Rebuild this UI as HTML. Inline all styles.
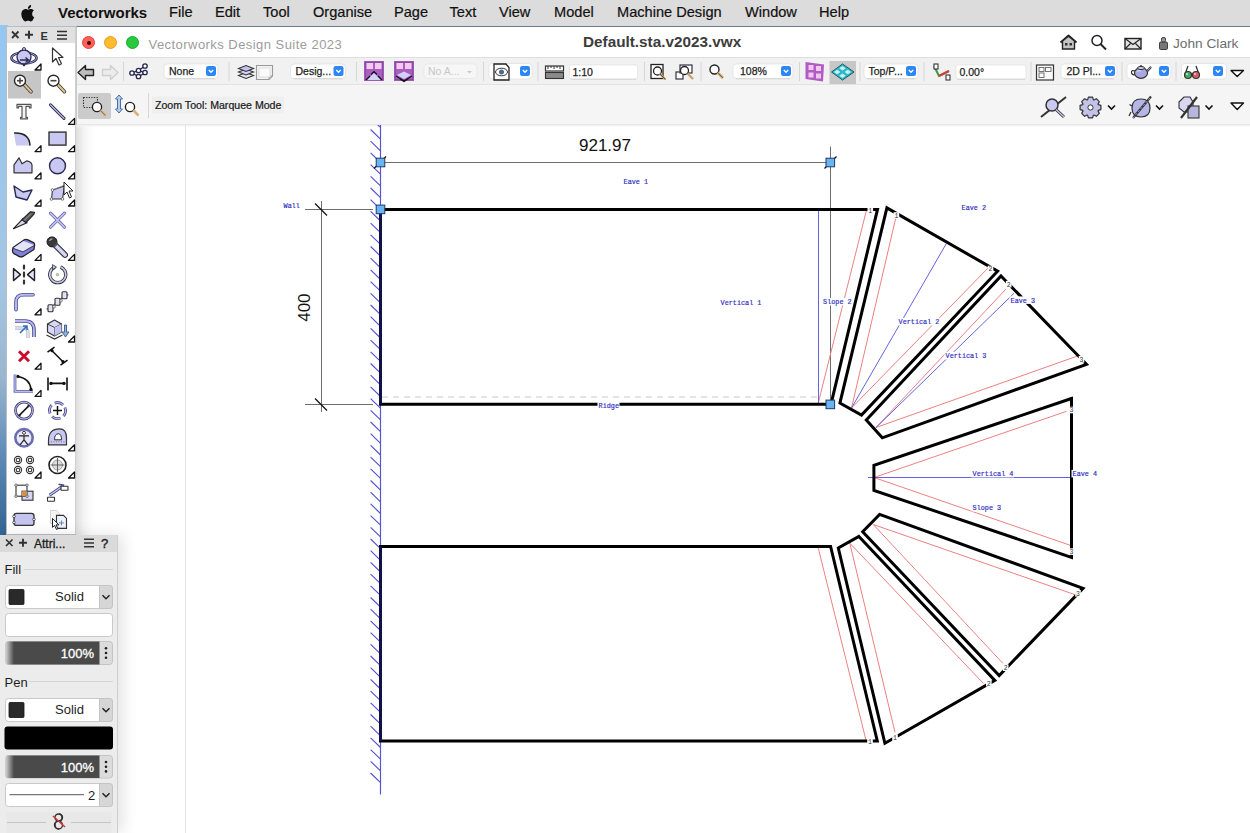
<!DOCTYPE html>
<html><head><meta charset="utf-8">
<style>
*{box-sizing:border-box}
html,body{margin:0;padding:0}
body{width:1250px;height:833px;overflow:hidden;position:relative;background:#d6dde5;font-family:"Liberation Sans",sans-serif;color:#222}
.abs{position:absolute}
#desk{left:0;top:24px;width:8px;height:520px;background:linear-gradient(#93c8f2,#a4c6e4 50%,#9ab6d0 68%,#5a88b4 84%,#2f5e8e)}
#menubar{left:0;top:0;width:1250px;height:24.5px;background:#dcdcdc}
#menubar span{position:absolute;top:4px;font-size:14.6px;color:#111;white-space:nowrap;-webkit-text-stroke:0.2px #111}
#win{left:76px;top:26px;width:1174px;height:807px;background:#fff;border-top:1px solid #6f7a86;border-left:1px solid #c8c8c8}
#title{left:0;top:0;width:1174px;height:30px;background:#fff}
#tb1{left:0;top:30px;width:1174px;height:28px;background:#f1f1f1;border-top:1px solid #dedede;border-bottom:1px solid #e2e2e2}
#tb2{left:0;top:58px;width:1174px;height:40px;background:#f5f5f5;border-bottom:1px solid #e6e6e6}
.light{width:13px;height:13px;border-radius:50%;top:9px}
.dd{position:absolute;height:19px;background:#fff;border-radius:4px;box-shadow:0 0.5px 1.5px rgba(0,0,0,.3);font-size:11px;color:#222;line-height:19px;padding-left:7px;white-space:nowrap}
.dd .chk{position:absolute;right:3px;top:3px;width:13px;height:13px;border-radius:3px;background:#2a86f4}
.dd .chk:after{content:"";position:absolute;left:3.5px;top:3px;width:4px;height:4px;border-right:1.6px solid #fff;border-bottom:1.6px solid #fff;transform:rotate(45deg)}
.sep{position:absolute;width:1px;background:#d8d8d8}
#pal{left:6px;top:26px;width:69.5px;height:509px;background:#fff;border:1px solid #b9bcc2;border-right:1px solid #d0d0d0}
#palhdr{left:0;top:0;width:68px;height:16px;background:#e1e1e1}
#attr{left:0;top:535px;width:118px;height:298px;background:#ececec;border-right:1px solid #cfcfcf;box-shadow:5px 0 14px rgba(0,0,0,.11)}
#attrhdr{left:0;top:0;width:117px;height:17px;background:#dadada}
</style></head>
<body>
<div id="desk" class="abs"></div>
<div id="menubar" class="abs">
  <svg class="abs" style="left:21px;top:4px" width="16" height="18" viewBox="0 0 16 18"><path d="M11.2 9.6c0-2 1.6-2.9 1.7-3-0.9-1.4-2.4-1.6-2.9-1.6-1.2-0.1-2.400.7-3 0.7-0.6 0-1.6-0.7-2.6-0.7C3 5.100 1.7 5.900 1 7.200c-1.400 2.500-0.4 6.200 1 8.200 0.7 1 1.500 2.100 2.500 2 1-0.04 1.400-0.6 2.600-0.6s1.500 0.6 2.600 0.600c1.100 0 1.800-1 2.400-2 0.800-1.100 1.100-2.200 1.100-2.300-0.03 0-2.100-0.800-2.100-3.200zM9.300 3.700c0.500-0.700 0.900-1.600 0.800-2.600-0.800 0.03-1.800 0.500-2.400 1.200-0.500 0.600-1 1.600-0.800 2.500 0.900 0.1 1.800-0.400 2.400-1.100z" fill="#111"/></svg>
  <span style="left:58px;font-weight:bold;font-size:15px;-webkit-text-stroke:0">Vectorworks</span>
  <span style="left:169px">File</span>
  <span style="left:215px">Edit</span>
  <span style="left:263px">Tool</span>
  <span style="left:313px">Organise</span>
  <span style="left:394px">Page</span>
  <span style="left:449.5px">Text</span>
  <span style="left:499px">View</span>
  <span style="left:554px">Model</span>
  <span style="left:617px">Machine Design</span>
  <span style="left:745px">Window</span>
  <span style="left:819px">Help</span>
</div>

<div id="win" class="abs">
  <div id="title" class="abs">
    <div class="abs light" style="left:5px;background:#fe5f57;border:0.5px solid #e0443e"><div class="abs" style="left:4px;top:4px;width:4px;height:4px;border-radius:50%;background:#4d0000"></div></div>
    <div class="abs light" style="left:27px;background:#febc2e;border:0.5px solid #dfa023"></div>
    <div class="abs light" style="left:49px;background:#28c840;border:0.5px solid #1aab29"></div>
    <div class="abs" style="left:71.5px;top:10px;font-size:13px;letter-spacing:0.45px;color:#9c9c9c;white-space:nowrap">Vectorworks Design Suite 2023</div>
    <div class="abs" style="left:506px;top:6px;font-size:15.3px;font-weight:bold;color:#3c3c3c;white-space:nowrap">Default.sta.v2023.vwx</div>
    <div class="abs" style="left:1096px;top:9px;font-size:13.7px;color:#6e6e6e;white-space:nowrap">John Clark</div>
  </div>
  <div id="tb1" class="abs"></div>
  <div id="tb2" class="abs">
    <div class="abs" style="left:1px;top:8px;width:33px;height:26px;background:#cbcbcb;border-radius:2px"></div>
  </div>
</div>

<svg id="ui" class="abs" style="left:0;top:0" width="1250" height="125" font-family="Liberation Sans">
<path d="M1060.5 42.5L1068.5 35.5L1076.5 42.5" fill="none" stroke="#222" stroke-width="1.8" stroke-linejoin="round"/><path d="M1062.5 41L1068.5 36.3L1074.5 41V49H1062.5Z" fill="#c4c4c4" stroke="#222" stroke-width="1.4"/><rect x="1065" y="43" width="2.5" height="2.5" fill="#333"/><rect x="1069.5" y="43" width="2.5" height="2.5" fill="#333"/>
<circle cx="1097" cy="40.5" r="5" fill="#fff" stroke="#222" stroke-width="1.5"/><line x1="1100.5" y1="44" x2="1106" y2="49.5" stroke="#222" stroke-width="2"/>
<rect x="1125" y="38.5" width="16" height="10.5" fill="#e4e4e4" stroke="#222" stroke-width="1.4"/><path d="M1125 38.5L1133 44.5L1141 38.5M1125 49L1130.5 43.5M1141 49L1135.5 43.5" fill="none" stroke="#222" stroke-width="1.1"/>
<rect x="1159.5" y="42" width="8" height="7.5" rx="1.2" fill="#777" stroke="#333" stroke-width="0.9"/><rect x="1161.5" y="37.5" width="4" height="4.5" rx="1.5" fill="#999" stroke="#333" stroke-width="0.9"/>
<path d="M78 72.5L85.5 65.5V69.5H93.5V75.5H85.5V79.5Z" fill="#bdbdbd" stroke="#222" stroke-width="1.4" stroke-linejoin="round"/>
<path d="M118 72.5L110.5 65.5V69.5H102.5V75.5H110.5V79.5Z" fill="#ececec" stroke="#cfcfcf" stroke-width="1.4" stroke-linejoin="round"/>
<line x1="123.5" y1="62" x2="123.5" y2="81" stroke="#d6d6d6" stroke-width="1"/>
<g stroke="#25254d" stroke-width="1.3" fill="#fff"><path d="M132 73L138.5 70.5L145 66M132 73L138.5 76.5L145 73M132 73L138.5 70.5L145 73M138.5 76.5L145 73" fill="none"/><circle cx="132" cy="73" r="2.2"/><circle cx="138.5" cy="70.5" r="2.2"/><circle cx="138.5" cy="76.5" r="2.2"/><circle cx="145" cy="66" r="2.2"/><circle cx="145" cy="72.5" r="2.2"/></g>
<rect x="164" y="64" width="54" height="14.5" rx="3.5" fill="#fff" stroke="#d9d9d9" stroke-width="0.6"/>
<line x1="167" y1="78.8" x2="215" y2="78.8" stroke="#cfcfcf" stroke-width="0.8"/>
<text x="169" y="74.6" font-size="10.5" fill="#222" stroke="#222" stroke-width="0.25" font-family="Liberation Sans">None</text>
<rect x="206" y="66" width="10" height="10" rx="2.2" fill="#2c87f5"/>
<path d="M208.8 70L211.0 72.3L213.2 70" stroke="#fff" stroke-width="1.3" fill="none"/>
<line x1="229" y1="62" x2="229" y2="81" stroke="#d6d6d6" stroke-width="1"/>
<g stroke="#333" stroke-width="1.1"><path d="M238.5 75.5L246 72.5L253.5 75.5L246 78.5Z" fill="#e6e6f6"/><path d="M238.5 72L246 69L253.5 72L246 75Z" fill="#d2d2f2"/><path d="M238.5 68.5L246 65.5L253.5 68.5L246 71.5Z" fill="#c4c4ee"/></g>
<path d="M256.5 65.5H272.5V76L269 79.5H256.5Z" fill="#f2f2f2" stroke="#9a9a9a" stroke-width="1.1"/><path d="M272.5 76H269V79.5" fill="none" stroke="#9a9a9a" stroke-width="0.9"/><rect x="259" y="68" width="11" height="9" fill="#fafafa" stroke="#d0d0d0" stroke-width="0.6"/>
<rect x="290.5" y="64" width="55.0" height="14.5" rx="3.5" fill="#fff" stroke="#d9d9d9" stroke-width="0.6"/>
<line x1="293.5" y1="78.8" x2="342.5" y2="78.8" stroke="#cfcfcf" stroke-width="0.8"/>
<text x="295.5" y="74.6" font-size="10.5" fill="#222" stroke="#222" stroke-width="0.25" font-family="Liberation Sans">Desig...</text>
<rect x="333.5" y="66" width="10" height="10" rx="2.2" fill="#2c87f5"/>
<path d="M336.3 70L338.5 72.3L340.7 70" stroke="#fff" stroke-width="1.3" fill="none"/>
<line x1="356.5" y1="62" x2="356.5" y2="81" stroke="#d6d6d6" stroke-width="1"/>
<rect x="364" y="61" width="20" height="20" fill="#a95fc0"/><rect x="365.2" y="62.2" width="17.6" height="17.6" fill="none" stroke="#7a3f90" stroke-width="0.8"/>
<rect x="366.5" y="63" width="6.5" height="6" fill="#f4c8f0"/><rect x="375" y="63" width="6.5" height="6" fill="#f4c8f0"/>
<rect x="394" y="61" width="20" height="20" fill="#a95fc0"/><rect x="395.2" y="62.2" width="17.6" height="17.6" fill="none" stroke="#7a3f90" stroke-width="0.8"/>
<rect x="396.5" y="63" width="6.5" height="6" fill="#f4c8f0"/><rect x="405" y="63" width="6.5" height="6" fill="#f4c8f0"/>
<path d="M367 80L374 73L381 80Z" fill="#d2d2f4"/><path d="M366 80L370 76M382 80L378 76M374 73V71.5M371 74.5L374 71.5L377 74.5" fill="none" stroke="#111" stroke-width="1.2"/>
<path d="M397 75L404 71.5L411 75L404 79Z" fill="#d2d2f4"/><path d="M396 76L404 81L412 76M400 79L404 81.5L408 79" fill="none" stroke="#111" stroke-width="1.3"/>
<rect x="424" y="64" width="53" height="14.5" rx="3.5" fill="#f6f6f6" stroke="#e3e3e3" stroke-width="0.6"/>
<text x="428" y="74.8" font-size="10.5" fill="#c6c6c6" font-family="Liberation Sans">No A...</text>
<path d="M467 71L469.5 73.5L472 71Z" fill="#c8c8c8"/>
<line x1="483.5" y1="62" x2="483.5" y2="81" stroke="#d6d6d6" stroke-width="1"/>
<rect x="489" y="63.5" width="43" height="15.5" rx="3.5" fill="#fff" stroke="#d9d9d9" stroke-width="0.6"/>
<path d="M494 64V80H509V67.5L506 64Z" fill="#fff" stroke="#222" stroke-width="1.3"/>
<ellipse cx="501.5" cy="72" rx="6" ry="3.8" fill="#fff" stroke="#333" stroke-width="1"/><circle cx="501.5" cy="72" r="2.5" fill="#4d6a8c"/>
<rect x="520" y="66" width="10" height="10" rx="2.2" fill="#2c87f5"/>
<path d="M522.8 70L525.0 72.3L527.2 70" stroke="#fff" stroke-width="1.3" fill="none"/>
<line x1="538" y1="62" x2="538" y2="81" stroke="#d6d6d6" stroke-width="1"/>
<rect x="545.5" y="66" width="18" height="5" fill="#fff" stroke="#333" stroke-width="1.2"/><rect x="545.5" y="72.5" width="18" height="6" fill="#8a8a8a" stroke="#333" stroke-width="1.1"/>
<path d="M548 66V69M551 66V68M554 66V69M557 66V68M560 66V69" stroke="#333" stroke-width="1"/>
<rect x="569.5" y="65" width="68" height="14" rx="2" fill="#fff" stroke="#dcdcdc" stroke-width="0.6"/>
<line x1="571" y1="79.3" x2="636" y2="79.3" stroke="#cfcfcf" stroke-width="0.8"/>
<text x="572.5" y="75.8" font-size="10.5" fill="#222" stroke="#222" stroke-width="0.25" font-family="Liberation Sans">1:10</text>
<line x1="644.5" y1="62" x2="644.5" y2="81" stroke="#d6d6d6" stroke-width="1"/>
<rect x="651" y="64.5" width="12" height="14" fill="#fff" stroke="#222" stroke-width="1.3"/><circle cx="657.5" cy="71" r="4" fill="#fff" stroke="#222" stroke-width="1.3"/><line x1="660" y1="74" x2="665.5" y2="79.5" stroke="#c9a36a" stroke-width="2.4"/><line x1="660" y1="74" x2="665.5" y2="79.5" stroke="#222" stroke-width="0.6"/>
<rect x="676" y="72" width="7" height="7" fill="#fff" stroke="#334" stroke-width="1.2"/><rect x="680" y="65" width="12" height="8" fill="#fff" stroke="#334" stroke-width="1.2"/><circle cx="684.5" cy="70.5" r="4" fill="#fff" stroke="#222" stroke-width="1.3"/><line x1="687.5" y1="73.5" x2="693" y2="79" stroke="#c9a36a" stroke-width="2.4"/>
<line x1="701" y1="62" x2="701" y2="81" stroke="#d6d6d6" stroke-width="1"/>
<circle cx="714.5" cy="69.5" r="4.5" fill="#fff" stroke="#222" stroke-width="1.4"/><line x1="717.5" y1="72.5" x2="723" y2="78" stroke="#c9a36a" stroke-width="2.6"/><line x1="717.5" y1="72.5" x2="723" y2="78" stroke="#333" stroke-width="0.5"/>
<rect x="733" y="64" width="60" height="14.5" rx="3.5" fill="#fff" stroke="#d9d9d9" stroke-width="0.6"/>
<line x1="736" y1="78.8" x2="790" y2="78.8" stroke="#cfcfcf" stroke-width="0.8"/>
<text x="740" y="74.6" font-size="10.5" fill="#222" stroke="#222" stroke-width="0.25" font-family="Liberation Sans">108%</text>
<rect x="781" y="66" width="10" height="10" rx="2.2" fill="#2c87f5"/>
<path d="M783.8 70L786.0 72.3L788.2 70" stroke="#fff" stroke-width="1.3" fill="none"/>
<line x1="799.5" y1="62" x2="799.5" y2="81" stroke="#d6d6d6" stroke-width="1"/>
<path d="M805.5 62L824 64.5L823 81.5L805.5 79Z" fill="#b05cc4"/>
<g fill="#f0c8ee"><rect x="808.5" y="65" width="5" height="5"/><rect x="816" y="66" width="5" height="5"/><rect x="808.5" y="72.5" width="5" height="5"/><rect x="816" y="73.5" width="5" height="5"/></g>
<rect x="829.5" y="61" width="26.5" height="23" fill="#c7c7c7"/>
<path d="M831.5 72L842.5 64L854 72L842.5 80Z" fill="#2fb7c7" stroke="#1b5b66" stroke-width="1"/>
<path d="M834.0 72L837.2 69.7L840.4000000000001 72L837.2 74.3Z" fill="#c9f1f5"/>
<path d="M839.3 68.2L842.5 65.9L845.7 68.2L842.5 70.5Z" fill="#c9f1f5"/>
<path d="M844.5999999999999 72L847.8 69.7L851.0 72L847.8 74.3Z" fill="#c9f1f5"/>
<path d="M839.3 75.8L842.5 73.5L845.7 75.8L842.5 78.1Z" fill="#c9f1f5"/>
<line x1="860" y1="62" x2="860" y2="81" stroke="#d6d6d6" stroke-width="1"/>
<rect x="864" y="64" width="54" height="14.5" rx="3.5" fill="#fff" stroke="#d9d9d9" stroke-width="0.6"/>
<line x1="867" y1="78.8" x2="915" y2="78.8" stroke="#cfcfcf" stroke-width="0.8"/>
<text x="868.5" y="74.6" font-size="10.5" fill="#222" stroke="#222" stroke-width="0.25" font-family="Liberation Sans">Top/P...</text>
<rect x="906" y="66" width="10" height="10" rx="2.2" fill="#2c87f5"/>
<path d="M908.8 70L911.0 72.3L913.2 70" stroke="#fff" stroke-width="1.3" fill="none"/>
<line x1="924" y1="62" x2="924" y2="81" stroke="#d6d6d6" stroke-width="1"/>
<path d="M934 66L939 76L949 71" fill="none" stroke="#3a9a3a" stroke-width="2"/><path d="M939 76L949 71" stroke="#d43c3c" stroke-width="2"/><rect x="934" y="64" width="4" height="5" fill="#fff" stroke="#222" stroke-width="1"/><rect x="946" y="75" width="4" height="5" fill="#fff" stroke="#222" stroke-width="1"/>
<rect x="956" y="65" width="70" height="14" rx="2" fill="#fff" stroke="#dcdcdc" stroke-width="0.6"/>
<line x1="957" y1="79.3" x2="1025" y2="79.3" stroke="#cfcfcf" stroke-width="0.8"/>
<text x="959.5" y="75.8" font-size="10.5" fill="#222" stroke="#222" stroke-width="0.25" font-family="Liberation Sans">0.00°</text>
<line x1="1031" y1="62" x2="1031" y2="81" stroke="#d6d6d6" stroke-width="1"/>
<rect x="1036.5" y="65" width="17" height="15" fill="#fafafa" stroke="#333" stroke-width="1.2"/><rect x="1039" y="67.5" width="5" height="4" fill="none" stroke="#666" stroke-width="0.9"/><rect x="1045.5" y="67.5" width="5.5" height="4" fill="none" stroke="#666" stroke-width="0.9"/><rect x="1039" y="73" width="5" height="4.5" fill="none" stroke="#666" stroke-width="0.9"/>
<rect x="1061" y="64" width="56" height="14.5" rx="3.5" fill="#fff" stroke="#d9d9d9" stroke-width="0.6"/>
<line x1="1064" y1="78.8" x2="1114" y2="78.8" stroke="#cfcfcf" stroke-width="0.8"/>
<text x="1066.5" y="74.6" font-size="10.5" fill="#222" stroke="#222" stroke-width="0.25" font-family="Liberation Sans">2D Pl...</text>
<rect x="1105" y="66" width="10" height="10" rx="2.2" fill="#2c87f5"/>
<path d="M1107.8 70L1110.0 72.3L1112.2 70" stroke="#fff" stroke-width="1.3" fill="none"/>
<line x1="1122" y1="62" x2="1122" y2="81" stroke="#d6d6d6" stroke-width="1"/>
<rect x="1127" y="63.5" width="44" height="15.5" rx="3.5" fill="#fff" stroke="#d9d9d9" stroke-width="0.6"/>
<path d="M1135 71Q1131 69.5 1131.5 73Q1132 75 1135 75" fill="none" stroke="#333" stroke-width="1.2"/><path d="M1146.5 72L1150.5 67.5" stroke="#333" stroke-width="2.2" stroke-linecap="round"/><path d="M1146.5 72L1150.5 67.5" stroke="#b0b0e6" stroke-width="0.9" stroke-linecap="round"/><ellipse cx="1141" cy="73" rx="6.5" ry="5.3" fill="#a9a9e2" stroke="#333" stroke-width="1.2"/><ellipse cx="1141" cy="68" rx="3.5" ry="1.6" fill="#c8c8f2" stroke="#333" stroke-width="1"/><circle cx="1141" cy="66" r="1" fill="#333"/><path d="M1137 71.5Q1139 70 1141 71" fill="none" stroke="#fff" stroke-width="0.9" opacity="0.7"/>
<rect x="1159" y="66" width="10" height="10" rx="2.2" fill="#2c87f5"/>
<path d="M1161.8 70L1164.0 72.3L1166.2 70" stroke="#fff" stroke-width="1.3" fill="none"/>
<line x1="1176" y1="62" x2="1176" y2="81" stroke="#d6d6d6" stroke-width="1"/>
<rect x="1181.5" y="63.5" width="45" height="15.5" rx="3.5" fill="#fff" stroke="#d9d9d9" stroke-width="0.6"/>
<path d="M1185.5 73L1188 66M1198.5 73L1196 66M1191.5 74.5Q1192 73 1192.5 74.5" fill="none" stroke="#333" stroke-width="1.3"/><circle cx="1188" cy="75" r="3.5" fill="#43ad5f" stroke="#333" stroke-width="1.2"/><circle cx="1196" cy="75" r="3.5" fill="#dc5a66" stroke="#333" stroke-width="1.2"/><circle cx="1187" cy="74" r="1" fill="#fff" opacity="0.7"/><circle cx="1195" cy="74" r="1" fill="#fff" opacity="0.7"/>
<rect x="1213" y="66" width="10" height="10" rx="2.2" fill="#2c87f5"/>
<path d="M1215.8 70L1218.0 72.3L1220.2 70" stroke="#fff" stroke-width="1.3" fill="none"/>
<path d="M1231 70.5H1243.5L1237.2 76.5Z" fill="#fff" stroke="#111" stroke-width="1.4" stroke-linejoin="round"/>
<rect x="83.5" y="97.5" width="14" height="10" fill="none" stroke="#333" stroke-width="1.1" stroke-dasharray="1.3 1.3"/>
<circle cx="97" cy="107" r="4.6" fill="#fff" stroke="#222" stroke-width="1.4"/><line x1="100.2" y1="110.2" x2="105.5" y2="115.5" stroke="#d9b07a" stroke-width="2.6"/><line x1="100.2" y1="110.2" x2="105.5" y2="115.5" stroke="#333" stroke-width="0.5"/>
<path d="M119 95L122.5 99H120.5V109H122.5L119 113L115.5 109H117.5V99H115.5Z" fill="#b9cde9" stroke="#4a6fa8" stroke-width="1"/>
<circle cx="130" cy="107" r="4.6" fill="#fff" stroke="#222" stroke-width="1.4"/><line x1="133.2" y1="110.2" x2="138.5" y2="115.5" stroke="#d9b07a" stroke-width="2.6"/>
<line x1="148.5" y1="93" x2="148.5" y2="118" stroke="#d6d6d6" stroke-width="1"/>
<rect x="152" y="96.5" width="132" height="17" fill="#efefef"/>
<text x="155" y="108.8" font-size="10.6" fill="#1a1a1a" stroke="#1a1a1a" stroke-width="0.22">Zoom Tool: Marquee Mode</text>
<line x1="1041" y1="117" x2="1066" y2="97" stroke="#333" stroke-width="2"/><circle cx="1052" cy="105" r="6" fill="#c9c9f3" stroke="#333" stroke-width="1.5"/><line x1="1056" y1="109.5" x2="1064" y2="117" stroke="#333" stroke-width="3"/><line x1="1056" y1="109.5" x2="1064" y2="117" stroke="#c9c9f3" stroke-width="1.3"/>
<polygon points="1098.2,104.6 1100.9,105.4 1100.9,109.6 1098.2,110.4 1098.0,110.9 1099.3,113.4 1096.4,116.3 1093.9,115.0 1093.4,115.2 1092.6,117.9 1088.4,117.9 1087.6,115.2 1087.1,115.0 1084.6,116.3 1081.7,113.4 1083.0,110.9 1082.8,110.4 1080.1,109.6 1080.1,105.4 1082.8,104.6 1083.0,104.1 1081.7,101.6 1084.6,98.7 1087.1,100.0 1087.6,99.8 1088.4,97.1 1092.6,97.1 1093.4,99.8 1093.9,100.0 1096.4,98.7 1099.3,101.6 1098.0,104.1" fill="#c3c3ea" stroke="#333" stroke-width="1.2" stroke-linejoin="round"/><circle cx="1090.5" cy="107.5" r="2.6" fill="#fff" stroke="#333" stroke-width="1"/>
<path d="M1108.0 105.5L1111.5 109L1115.0 105.5" fill="none" stroke="#111" stroke-width="1.6"/>
<path d="M1156.0 105.5L1159.5 109L1163.0 105.5" fill="none" stroke="#111" stroke-width="1.6"/>
<path d="M1205.5 105.5L1209 109L1212.5 105.5" fill="none" stroke="#111" stroke-width="1.6"/>
<path d="M1132 108Q1132 117 1141 117Q1150 117 1150 108Q1150 99 1141 99Q1132 99 1132 108Z" fill="#b5b5e6" stroke="#333" stroke-width="1.2"/><path d="M1132 106L1129.5 104.5M1131 112L1129 116" stroke="#333" stroke-width="1.3"/><line x1="1133" y1="118" x2="1151" y2="96.5" stroke="#333" stroke-width="2.2"/><line x1="1133" y1="118" x2="1151" y2="96.5" stroke="#c9c9f3" stroke-width="0.8" stroke-dasharray="2 2"/>
<path d="M1179 102L1184 97H1190L1193 102V108L1190 112H1184L1179 108Z" fill="#d7d7f2" stroke="#333" stroke-width="1.1"/><rect x="1188" y="106" width="11" height="12" fill="#b7b7dd" stroke="#333" stroke-width="1.1"/><line x1="1181" y1="118" x2="1197" y2="97" stroke="#333" stroke-width="2.2"/>
<path d="M1231 103H1243.5L1237.2 109.5Z" fill="#fff" stroke="#111" stroke-width="1.4" stroke-linejoin="round"/>
</svg>
<svg id="draw" class="abs" style="left:76px;top:125px" width="1174" height="708" viewBox="76 125 1174 708">
<defs><linearGradient id="csh" x1="0" x2="1"><stop offset="0" stop-color="#dedede"/><stop offset="0.35" stop-color="#f3f3f3"/><stop offset="1" stop-color="#fff" stop-opacity="0"/></linearGradient><linearGradient id="tsh" x1="0" x2="0" y1="0" y2="1"><stop offset="0" stop-color="#ececec"/><stop offset="1" stop-color="#fff" stop-opacity="0"/></linearGradient></defs>
<rect x="76" y="125" width="22" height="708" fill="url(#csh)"/>
<rect x="76" y="125" width="1174" height="3" fill="url(#tsh)"/>
<line x1="185.5" y1="125" x2="185.5" y2="833" stroke="#e3e3e3" stroke-width="1"/>
<g stroke="#5252d6" stroke-width="1.15" fill="none">
<line x1="380.5" y1="124" x2="380.5" y2="794.5"/>
<path d="M370.6 773.0L380.5 782.6M370.6 761.3L380.5 770.9M370.6 749.6L380.5 759.2M370.6 737.9L380.5 747.5M370.6 726.2L380.5 735.8M370.6 714.5L380.5 724.1M370.6 702.8L380.5 712.4M370.6 691.1L380.5 700.7M370.6 679.4L380.5 689.0M370.6 667.7L380.5 677.3M370.6 656.0L380.5 665.6M370.6 644.3L380.5 653.9M370.6 632.6L380.5 642.2M370.6 620.9L380.5 630.5M370.6 609.2L380.5 618.8M370.6 597.5L380.5 607.1M370.6 585.8L380.5 595.4M370.6 574.1L380.5 583.7M370.6 562.4L380.5 572.0M370.6 550.7L380.5 560.3M370.6 539.0L380.5 548.6M370.6 527.3L380.5 536.9M370.6 515.6L380.5 525.2M370.6 503.9L380.5 513.5M370.6 492.2L380.5 501.8M370.6 480.5L380.5 490.1M370.6 468.8L380.5 478.4M370.6 457.1L380.5 466.7M370.6 445.4L380.5 455.0M370.6 433.7L380.5 443.3M370.6 422.0L380.5 431.6M370.6 410.3L380.5 419.9M370.6 398.6L380.5 408.2M370.6 386.9L380.5 396.5M370.6 375.2L380.5 384.8M370.6 363.5L380.5 373.1M370.6 351.8L380.5 361.4M370.6 340.1L380.5 349.7M370.6 328.4L380.5 338.0M370.6 316.7L380.5 326.3M370.6 305.0L380.5 314.6M370.6 293.3L380.5 302.9M370.6 281.6L380.5 291.2M370.6 269.9L380.5 279.5M370.6 258.2L380.5 267.8M370.6 246.5L380.5 256.1M370.6 234.8L380.5 244.4M370.6 223.1L380.5 232.7M370.6 211.4L380.5 221.0M370.6 199.7L380.5 209.3M370.6 188.0L380.5 197.6M370.6 176.3L380.5 185.9M370.6 164.6L380.5 174.2M370.6 152.9L380.5 162.5M370.6 141.2L380.5 150.8M370.6 129.5L380.5 139.1M370.6 117.8L380.5 127.4"/>
</g>
<g stroke="#6e6e6e" stroke-width="1" fill="none">
<line x1="380" y1="162.5" x2="830.5" y2="162.5"/>
<line x1="830.5" y1="146.5" x2="830.5" y2="404"/>
<line x1="305" y1="209.5" x2="373" y2="209.5"/>
<line x1="305" y1="404.5" x2="373" y2="404.5"/>
<line x1="321.5" y1="201" x2="321.5" y2="412"/>
</g>
<g stroke="#111" stroke-width="1.2" fill="none">
<line x1="315" y1="203.5" x2="327" y2="215.5"/>
<line x1="315" y1="398.5" x2="327" y2="410.5"/>
<line x1="374" y1="168.5" x2="386" y2="156.5"/>
<line x1="824.5" y1="168.5" x2="836.5" y2="156.5"/>
</g>
<line x1="382" y1="397" x2="818" y2="397" stroke="#c8c8c8" stroke-width="1" stroke-dasharray="6 5"/>
<g stroke="#f07f7f" stroke-width="1" fill="none">
<line x1="818" y1="404" x2="866.5" y2="210"/>
<line x1="851.5" y1="408" x2="896" y2="217"/>
<line x1="851.5" y1="408" x2="990" y2="266"/>
<line x1="876" y1="427.5" x2="1006" y2="289"/>
<line x1="876" y1="427.5" x2="1077.5" y2="356"/>
<line x1="874" y1="477.5" x2="1066.5" y2="411.3"/>
<line x1="874" y1="477.5" x2="1070.5" y2="545.4"/>
<line x1="873.3" y1="524.5" x2="1078" y2="595.7"/>
<line x1="873.3" y1="524.5" x2="1002.9" y2="663.4"/>
<line x1="849.8" y1="543.2" x2="895" y2="732.3"/>
<line x1="849.8" y1="543.2" x2="983.5" y2="683.5"/>
<line x1="818" y1="547" x2="866.2" y2="741"/>
</g>
<g stroke="#6464e2" stroke-width="1" fill="none">
<line x1="818.5" y1="209.5" x2="818.5" y2="404"/>
<line x1="851.5" y1="408" x2="946.2" y2="243.8"/>
<line x1="876" y1="427.5" x2="1014" y2="293.3"/>
<line x1="868" y1="477.5" x2="1071.5" y2="477.5"/>
</g>
<g stroke="#000" stroke-width="3" fill="none" stroke-linejoin="miter">
<polygon points="380.5,209.4 877.5,209.4 831,404.2 380.5,404.2"/>
<polygon points="886.9,207.9 997.6,271.2 861.5,415.1 839.9,403.1"/>
<polygon points="1001,276 1086.5,364.3 882.3,437.8 866.3,420"/>
<polygon points="1071.5,398.5 873.9,465.3 873.9,490.3 1071.5,557.3"/>
<polygon points="879.6,514.4 1083,588.3 999.2,675.5 862.7,531.7"/>
<polygon points="858.9,536.5 994.8,680.4 884.9,743.3 838.3,548"/>
<polygon points="380.5,546.5 830.6,546.5 877.3,741 380.5,741"/>
</g>
<g stroke="#10104a" stroke-width="3">
<line x1="380.5" y1="209.4" x2="380.5" y2="404.2"/>
<line x1="380.5" y1="546.5" x2="380.5" y2="741"/>
</g>
<rect x="376.2" y="158.2" width="8.6" height="8.6" fill="#6ab4f2" stroke="#1f3a66" stroke-width="1"/>
<rect x="376.2" y="205.1" width="8.6" height="8.6" fill="#6ab4f2" stroke="#1f3a66" stroke-width="1"/>
<rect x="826.0" y="158.2" width="8.6" height="8.6" fill="#6ab4f2" stroke="#1f3a66" stroke-width="1"/>
<rect x="826.0" y="400.09999999999997" width="8.6" height="8.6" fill="#6ab4f2" stroke="#1f3a66" stroke-width="1"/>
<text x="605" y="151" font-family="Liberation Sans" font-size="17" text-anchor="middle" fill="#111">921.97</text>
<text transform="translate(310,307.6) rotate(-90)" font-family="Liberation Sans" font-size="17" text-anchor="middle" fill="#111">400</text>
<rect x="282.5" y="201.4" width="17.9" height="7.5" fill="#fff"/>
<text x="283.6" y="207.9" font-family="Liberation Mono" font-size="6.8" fill="#3030c0" stroke="#3030c0" stroke-width="0.18">Wall</text>
<rect x="622.5" y="177.4" width="26.099999999999998" height="7.5" fill="#fff"/>
<text x="623.6" y="183.9" font-family="Liberation Mono" font-size="6.8" fill="#3030c0" stroke="#3030c0" stroke-width="0.18">Eave 1</text>
<rect x="719.5" y="298.9" width="42.5" height="7.5" fill="#fff"/>
<text x="720.6" y="305.4" font-family="Liberation Mono" font-size="6.8" fill="#3030c0" stroke="#3030c0" stroke-width="0.18">Vertical 1</text>
<rect x="822.0" y="297.9" width="30.199999999999996" height="7.5" fill="#fff"/>
<text x="823.1" y="304.4" font-family="Liberation Mono" font-size="6.8" fill="#3030c0" stroke="#3030c0" stroke-width="0.18">Slope 2</text>
<rect x="960.5" y="203.9" width="26.099999999999998" height="7.5" fill="#fff"/>
<text x="961.6" y="210.4" font-family="Liberation Mono" font-size="6.8" fill="#3030c0" stroke="#3030c0" stroke-width="0.18">Eave 2</text>
<rect x="897.5" y="317.9" width="42.5" height="7.5" fill="#fff"/>
<text x="898.6" y="324.4" font-family="Liberation Mono" font-size="6.8" fill="#3030c0" stroke="#3030c0" stroke-width="0.18">Vertical 2</text>
<rect x="1009.5" y="296.4" width="26.099999999999998" height="7.5" fill="#fff"/>
<text x="1010.6" y="302.9" font-family="Liberation Mono" font-size="6.8" fill="#3030c0" stroke="#3030c0" stroke-width="0.18">Eave 3</text>
<rect x="944.5" y="351.9" width="42.5" height="7.5" fill="#fff"/>
<text x="945.6" y="358.4" font-family="Liberation Mono" font-size="6.8" fill="#3030c0" stroke="#3030c0" stroke-width="0.18">Vertical 3</text>
<rect x="597.5" y="401.4" width="22.0" height="7.5" fill="#fff"/>
<text x="598.6" y="407.9" font-family="Liberation Mono" font-size="6.8" fill="#3030c0" stroke="#3030c0" stroke-width="0.18">Ridge</text>
<rect x="971.5" y="469.9" width="42.5" height="7.5" fill="#fff"/>
<text x="972.6" y="476.4" font-family="Liberation Mono" font-size="6.8" fill="#3030c0" stroke="#3030c0" stroke-width="0.18">Vertical 4</text>
<rect x="1071.5" y="469.9" width="26.099999999999998" height="7.5" fill="#fff"/>
<text x="1072.6" y="476.4" font-family="Liberation Mono" font-size="6.8" fill="#3030c0" stroke="#3030c0" stroke-width="0.18">Eave 4</text>
<rect x="971.5" y="503.9" width="30.199999999999996" height="7.5" fill="#fff"/>
<text x="972.6" y="510.4" font-family="Liberation Mono" font-size="6.8" fill="#3030c0" stroke="#3030c0" stroke-width="0.18">Slope 3</text>
<rect x="867.5" y="207.5" width="5.6" height="6.6" fill="#fff"/>
<text x="870.3" y="213.10000000000002" font-family="Liberation Mono" font-size="6.5" text-anchor="middle" fill="#333">1</text>
<rect x="893.6" y="212.2" width="5.6" height="6.6" fill="#fff"/>
<text x="896.4" y="217.8" font-family="Liberation Mono" font-size="6.5" text-anchor="middle" fill="#333">1</text>
<rect x="987.7" y="265.7" width="5.6" height="6.6" fill="#fff"/>
<text x="990.5" y="271.3" font-family="Liberation Mono" font-size="6.5" text-anchor="middle" fill="#333">2</text>
<rect x="1005.9000000000001" y="280.9" width="5.6" height="6.6" fill="#fff"/>
<text x="1008.7" y="286.5" font-family="Liberation Mono" font-size="6.5" text-anchor="middle" fill="#333">2</text>
<rect x="1078.7" y="356.0" width="5.6" height="6.6" fill="#fff"/>
<text x="1081.5" y="361.6" font-family="Liberation Mono" font-size="6.5" text-anchor="middle" fill="#333">3</text>
<rect x="1068.7" y="406.7" width="5.6" height="6.6" fill="#fff"/>
<text x="1071.5" y="412.3" font-family="Liberation Mono" font-size="6.5" text-anchor="middle" fill="#333">3</text>
<rect x="1068.7" y="548.3000000000001" width="5.6" height="6.6" fill="#fff"/>
<text x="1071.5" y="553.9" font-family="Liberation Mono" font-size="6.5" text-anchor="middle" fill="#333">3</text>
<rect x="1075.2" y="590.0" width="5.6" height="6.6" fill="#fff"/>
<text x="1078" y="595.5999999999999" font-family="Liberation Mono" font-size="6.5" text-anchor="middle" fill="#333">3</text>
<rect x="1002.9000000000001" y="664.4000000000001" width="5.6" height="6.6" fill="#fff"/>
<text x="1005.7" y="670.0" font-family="Liberation Mono" font-size="6.5" text-anchor="middle" fill="#333">2</text>
<rect x="986.0" y="679.9000000000001" width="5.6" height="6.6" fill="#fff"/>
<text x="988.8" y="685.5" font-family="Liberation Mono" font-size="6.5" text-anchor="middle" fill="#333">2</text>
<rect x="892.2" y="734.3000000000001" width="5.6" height="6.6" fill="#fff"/>
<text x="895" y="739.9" font-family="Liberation Mono" font-size="6.5" text-anchor="middle" fill="#333">1</text>
<rect x="867.2" y="737.9000000000001" width="5.6" height="6.6" fill="#fff"/>
<text x="870" y="743.5" font-family="Liberation Mono" font-size="6.5" text-anchor="middle" fill="#333">1</text>
</svg>

<div id="pal" class="abs">
  <div id="palhdr" class="abs"></div>
</div>
<svg id="palsvg" class="abs" style="left:0;top:0" width="80" height="535">
<g stroke="#333" stroke-width="1.8" fill="none"><path d="M12 31.5L18.5 38M18.5 31.5L12 38"/><path d="M25 34.8H33M29 30.8V38.8" stroke-width="2"/></g>
<text x="40.5" y="39.5" font-size="11" fill="#333" font-family="Liberation Sans" font-weight="bold">E</text>
<g stroke="#333" stroke-width="1.5"><path d="M57 31.5H67M57 35.3H67M57 39H67"/></g>
<rect x="8" y="71" width="33" height="27.5" fill="#c6c6c6"/>
<g transform="translate(24,57.0)"><ellipse cx="0" cy="1" rx="12.5" ry="5.5" fill="none" stroke="#2a2a52" stroke-width="2.6"/><ellipse cx="0" cy="1" rx="12.5" ry="5.5" fill="none" stroke="#9b9be0" stroke-width="1"/><circle cx="0" cy="0" r="7" fill="#c8c8f2" stroke="#2a2a52" stroke-width="1.3"/><path d="M-4 3L4 3M1.5 0.5L4.5 3L1.5 5.5" fill="none" stroke="#2a2a52" stroke-width="1.4"/><circle cx="0" cy="-8" r="1.5" fill="#c8c8f2" stroke="#2a2a52" stroke-width="0.9"/><circle cx="0" cy="8" r="1.3" fill="#2a2a52"/></g>
<path d="M35 70.0H41V64.0Z" fill="#fff" stroke="#111" stroke-width="1.3" stroke-linejoin="round"/>
<g transform="translate(57.5,57.0)"><path d="M-5 -9V5L-1.5 1.5L1.5 8L4 6.8L1 0.5H5.5Z" fill="#fff" stroke="#333" stroke-width="1.2" stroke-linejoin="round"/></g>
<g transform="translate(24,84.2)"><line x1="0.5" y1="0.5" x2="7" y2="7.5" stroke="#3a3a3a" stroke-width="3.6" stroke-linecap="round"/><line x1="0.5" y1="0.5" x2="7" y2="7.5" stroke="#e3c08a" stroke-width="2" stroke-linecap="round"/><circle cx="-4" cy="-3.5" r="5.5" fill="#fff" stroke="#2a2a2a" stroke-width="1.4"/><path d="M-7 -3.5H-1" stroke="#444" stroke-width="1.6"/><path d="M-4 -6.5V-0.5" stroke="#444" stroke-width="1.6"/></g>
<g transform="translate(57.5,84.2)"><line x1="0.5" y1="0.5" x2="7" y2="7.5" stroke="#3a3a3a" stroke-width="3.6" stroke-linecap="round"/><line x1="0.5" y1="0.5" x2="7" y2="7.5" stroke="#e3c08a" stroke-width="2" stroke-linecap="round"/><circle cx="-4" cy="-3.5" r="5.5" fill="#fff" stroke="#2a2a2a" stroke-width="1.4"/><path d="M-7 -3.5H-1" stroke="#444" stroke-width="1.6"/></g>
<g transform="translate(24,111.4)"><path d="M-7 -7H7V-3.5H5.5V-5H2V6H3.5V7.5H-3.5V6H-2V-5H-5.5V-3.5H-7Z" fill="#f2f2f2" stroke="#555" stroke-width="1.2" stroke-linejoin="round"/></g>
<g transform="translate(57.5,111.4)"><line x1="-7" y1="-6.5" x2="6.5" y2="7" stroke="#2a2a52" stroke-width="3" stroke-linecap="round"/><line x1="-7" y1="-6.5" x2="6.5" y2="7" stroke="#c8c8f2" stroke-width="1.2" stroke-linecap="round"/></g>
<path d="M68.5 124.4H74.5V118.4Z" fill="#fff" stroke="#111" stroke-width="1.3" stroke-linejoin="round"/>
<g transform="translate(24,138.6)"><path d="M-10 -5Q5 -6 6 7H-8Z" fill="#c8c8f2"/><path d="M-10 -5.5Q5.5 -6 6 7" fill="none" stroke="#222" stroke-width="1.5"/></g>
<path d="M35 151.6H41V145.6Z" fill="#fff" stroke="#111" stroke-width="1.3" stroke-linejoin="round"/>
<g transform="translate(57.5,138.6)"><rect x="-8.5" y="-6.5" width="17" height="13" fill="#c8c8f2" stroke="#333" stroke-width="1.4"/></g>
<path d="M68.5 151.6H74.5V145.6Z" fill="#fff" stroke="#111" stroke-width="1.3" stroke-linejoin="round"/>
<g transform="translate(24,165.8)"><path d="M-10 7V-1L-5 -8L-2 -2L3 -5Q9 -4 8 2V7Z" fill="#c8c8f2" stroke="#333" stroke-width="1.2" stroke-linejoin="round"/></g>
<path d="M35 178.8H41V172.8Z" fill="#fff" stroke="#111" stroke-width="1.3" stroke-linejoin="round"/>
<g transform="translate(57.5,165.8)"><circle cx="0" cy="0" r="8" fill="#c8c8f2" stroke="#2a2a52" stroke-width="1.4"/></g>
<path d="M68.5 178.8H74.5V172.8Z" fill="#fff" stroke="#111" stroke-width="1.3" stroke-linejoin="round"/>
<g transform="translate(24,193.0)"><path d="M-10 -7L-1 -1L8 -3L3 7L-8 4Z" fill="#c8c8f2" stroke="#2a2a52" stroke-width="1.4" stroke-linejoin="round"/></g>
<path d="M35 206.0H41V200.0Z" fill="#fff" stroke="#111" stroke-width="1.3" stroke-linejoin="round"/>
<g transform="translate(57.5,193.0)"><path d="M-5 -3L7 -7L5 6H-6Z" fill="#c8c8f2" stroke="#333" stroke-width="1.1"/><path d="M-5 -3L7 -8" stroke="#888" stroke-width="0.8"/><circle cx="-6" cy="6" r="1.3" fill="#fff" stroke="#555" stroke-width="0.8"/><circle cx="5" cy="6" r="1.3" fill="#fff" stroke="#555" stroke-width="0.8"/><circle cx="-5" cy="-3" r="1.3" fill="#fff" stroke="#555" stroke-width="0.8"/></g>
<path d="M68.5 206.0H74.5V200.0Z" fill="#fff" stroke="#111" stroke-width="1.3" stroke-linejoin="round"/>
<path d="M64 182V195L67 192L69.5 198L71.5 197L69 191H73Z" fill="#fff" stroke="#222" stroke-width="1" stroke-linejoin="round"/>
<g transform="translate(24,220.2)"><path d="M-10.5 8.5L-1 -1.5L3 2.5Z" fill="#d6d6f2" stroke="#222" stroke-width="1.2" stroke-linejoin="round"/><path d="M-2 -0.5L6.5 -8.5L10.5 -8L10 -6L2 2.5Z" fill="#5a5a5a" stroke="#222" stroke-width="1.1" stroke-linejoin="round"/><path d="M0 0.5L7 -6.5" stroke="#9a9a9a" stroke-width="1"/></g>
<g transform="translate(57.5,220.2)"><path d="M-7 -7L7 7M7 -7L-7 7" stroke="#7070b5" stroke-width="3.2" stroke-linecap="round"/><path d="M-7 -7L7 7M7 -7L-7 7" stroke="#c8c8f2" stroke-width="1.4" stroke-linecap="round"/></g>
<g transform="translate(24,247.4)"><path d="M-11 0L0 -7.5Q2 -8.5 4 -7.5L10 -4.5Q11 -3.5 10.5 -1.5L10 2L-1 9Q-3 10 -5 9L-10.5 6Q-11.5 5 -11.5 3Z" fill="#8080dc" stroke="#222" stroke-width="1.2" stroke-linejoin="round"/><path d="M-10.5 0.5L-0.5 -6.5L10 -2.5L-1 4Z" fill="#e4e4f8"/><path d="M-11 1L-1 4.5L10.5 -2" fill="none" stroke="#333" stroke-width="0.8"/></g>
<path d="M35 260.4H41V254.39999999999998Z" fill="#fff" stroke="#111" stroke-width="1.3" stroke-linejoin="round"/>
<g transform="translate(57.5,247.4)"><path d="M-2 -2L7.5 7.5" stroke="#333" stroke-width="6" stroke-linecap="round"/><path d="M-2 -2L7.5 7.5" stroke="#c8c8f2" stroke-width="3.8" stroke-linecap="round"/><path d="M-1 -1L8 8" stroke="#fff" stroke-width="1" stroke-linecap="round" opacity="0.7"/><circle cx="-5.5" cy="-5.5" r="5" fill="#3a3a3a" stroke="#1a1a1a" stroke-width="1"/><path d="M-8 -6.5Q-7 -8.5 -5 -8.5" fill="none" stroke="#aaa" stroke-width="1.2"/><path d="M-3.5 -0.5L0 -4" stroke="#555" stroke-width="2"/></g>
<path d="M68.5 260.4H74.5V254.39999999999998Z" fill="#fff" stroke="#111" stroke-width="1.3" stroke-linejoin="round"/>
<g transform="translate(24,274.6)"><path d="M-10.5 -6V6L-3.5 0Z M10.5 -6V6L3.5 0Z" fill="#e2e2f6" stroke="#222" stroke-width="1.4" stroke-linejoin="round"/><path d="M0 -9V-6M0 -2V2M0 6V9" stroke="#333" stroke-width="2.2" stroke-linecap="round"/></g>
<g transform="translate(57.5,274.6)"><path d="M-2.5 -7.5A8 8 0 1 0 3 -7.5" fill="none" stroke="#333" stroke-width="3.3"/><path d="M-2.5 -7.5A8 8 0 1 0 3 -7.5" fill="none" stroke="#c8c8f2" stroke-width="1.6"/><path d="M-5 -10L-1 -7.5L-5 -5Z" fill="#c8c8f2" stroke="#333" stroke-width="0.8"/><circle cx="0" cy="0" r="1.2" fill="#ddd" stroke="#886" stroke-width="0.7"/></g>
<g transform="translate(24,301.79999999999995)"><path d="M-8 8V0Q-8 -7 0 -7H9" fill="none" stroke="#4a4a90" stroke-width="3.6" stroke-linecap="round"/><path d="M-8 8V0Q-8 -7 0 -7H9" fill="none" stroke="#b8b8ee" stroke-width="2" stroke-linecap="round"/></g>
<path d="M35 314.79999999999995H41V308.79999999999995Z" fill="#fff" stroke="#111" stroke-width="1.3" stroke-linejoin="round"/>
<g transform="translate(57.5,301.79999999999995)"><path d="M-11 7H-8M8 -7H11M-8 7L8 -7" stroke="#666" stroke-width="1.2"/><g fill="#e2e2f4" stroke="#333" stroke-width="1.1"><rect x="-9.5" y="3" width="5" height="7" rx="1"/><rect x="-2.5" y="-3.5" width="5" height="7" rx="1"/><rect x="4.5" y="-10" width="5" height="7" rx="1"/></g><g fill="#fff" stroke="#555" stroke-width="0.8"><circle cx="-3.5" cy="5" r="1.3"/><circle cx="3.5" cy="-1" r="1.3"/></g></g>
<g transform="translate(24,329.0)"><path d="M-9 -1H-1Q4 -1 4 4V9" fill="none" stroke="#b9b9c9" stroke-width="3.4"/><path d="M-9 -1H-1Q4 -1 4 4V9" fill="none" stroke="#e6e6ee" stroke-width="1.6"/><path d="M-9 -8H1Q10 -8 10 1V8" fill="none" stroke="#4a4a90" stroke-width="3.6"/><path d="M-9 -8H1Q10 -8 10 1V8" fill="none" stroke="#b8b8ee" stroke-width="1.8"/><path d="M-4 4L3 -3M-1 -3H3V1" fill="none" stroke="#2f6fc0" stroke-width="1.6"/></g>
<g transform="translate(57.5,329.0)"><path d="M-10 -5L-3 -9L4 -5V3L-3 7L-10 3Z" fill="#d8d8f6" stroke="#333" stroke-width="1.2" stroke-linejoin="round"/><path d="M-10 -5L-3 -1.5L4 -5M-3 -1.5V7" fill="none" stroke="#333" stroke-width="0.9"/><path d="M-3 -1.5L4 -5V3L-3 7Z" fill="#c2c2ee"/><path d="M-11 6L-3 10L5 6" fill="none" stroke="#333" stroke-width="1.2"/><path d="M7 -4V3H4.5L8 8L11.5 3H9V-4Z" fill="#8fb0da" stroke="#3a5a8a" stroke-width="0.9"/></g>
<path d="M68.5 342.0H74.5V336.0Z" fill="#fff" stroke="#111" stroke-width="1.3" stroke-linejoin="round"/>
<g transform="translate(24,356.2)"><path d="M-5 -5L5 5M5 -5L-5 5" stroke="#c8102e" stroke-width="3"/></g>
<path d="M35 369.2H41V363.2Z" fill="#fff" stroke="#111" stroke-width="1.3" stroke-linejoin="round"/>
<g transform="translate(57.5,356.2)"><path d="M-10 -4L-3 -9M3 9L10 4M-5.5 -5.5L5.5 5.5" stroke="#111" stroke-width="1.5"/><circle cx="-5.5" cy="-5.5" r="1.6" fill="#111"/><circle cx="5.5" cy="5.5" r="1.6" fill="#111"/></g>
<g transform="translate(24,383.4)"><path d="M-9 -9V8H9" fill="none" stroke="#6a6ab8" stroke-width="2.8"/><path d="M-9 -9V8H9" fill="none" stroke="#c8c8f0" stroke-width="1"/><path d="M-6 -7Q6 -5 7 6" fill="none" stroke="#111" stroke-width="1.5"/><circle cx="-6" cy="-7" r="1.6" fill="#111"/><circle cx="7" cy="6" r="1.6" fill="#111"/></g>
<path d="M35 396.4H41V390.4Z" fill="#fff" stroke="#111" stroke-width="1.3" stroke-linejoin="round"/>
<g transform="translate(57.5,383.4)"><path d="M-9.5 -6V7M9.5 -6V7M-7 0H7" stroke="#111" stroke-width="1.6"/><circle cx="-6.5" cy="0" r="1.7" fill="#111"/><circle cx="6.5" cy="0" r="1.7" fill="#111"/></g>
<g transform="translate(24,410.59999999999997)"><circle cx="0" cy="0" r="8.5" fill="#fff" stroke="#4a4a80" stroke-width="2.8"/><circle cx="0" cy="0" r="8.5" fill="none" stroke="#c0c0ee" stroke-width="1"/><path d="M-4.5 4.5L4.5 -4.5" stroke="#111" stroke-width="1.5"/><circle cx="-4.5" cy="4.5" r="1.2" fill="#222"/><circle cx="4.5" cy="-4.5" r="1.2" fill="#222"/></g>
<g transform="translate(57.5,410.59999999999997)"><circle cx="0" cy="0" r="8" fill="none" stroke="#55559a" stroke-width="2.8" stroke-dasharray="9 3.6" transform="rotate(-23)"/><circle cx="0" cy="0" r="8" fill="none" stroke="#c8c8f0" stroke-width="0.9" stroke-dasharray="9 3.6" transform="rotate(-23)"/><path d="M-4.5 0H4.5M0 -4.5V4.5" stroke="#111" stroke-width="1.5"/></g>
<g transform="translate(24,437.8)"><circle cx="0" cy="0" r="8.7" fill="#e8e8f8" stroke="#6b6bb0" stroke-width="2.6"/><path d="M-5 -2H5M0 -2V2L-4 7M0 2L4 7" fill="none" stroke="#222" stroke-width="1.2"/><circle cx="0" cy="-5" r="1.5" fill="#fff" stroke="#222" stroke-width="0.9"/></g>
<g transform="translate(57.5,437.8)"><path d="M-9 7V3Q-9 -9 2 -9Q9 -9 9 0V7Z" fill="#c8c8f2" stroke="#333" stroke-width="1.2"/><path d="M-3 2Q-3 -4 1 -4Q4 -4 4 2Z" fill="#fff" stroke="#333" stroke-width="1"/><path d="M-9 4H9" stroke="#666" stroke-width="0.8" stroke-dasharray="1 1.5"/></g>
<path d="M68.5 450.8H74.5V444.8Z" fill="#fff" stroke="#111" stroke-width="1.3" stroke-linejoin="round"/>
<g transform="translate(24,465.0)"><g fill="none" stroke="#333" stroke-width="1.1"><circle cx="-6" cy="-5" r="3.6"/><circle cx="-6" cy="-5" r="1.8"/><circle cx="-6" cy="5" r="3.6"/><circle cx="-6" cy="5" r="1.8"/><circle cx="6" cy="-5" r="3.6"/><circle cx="6" cy="-5" r="1.8"/><circle cx="6" cy="5" r="3.6"/><circle cx="6" cy="5" r="1.8"/></g></g>
<path d="M35 478.0H41V472.0Z" fill="#fff" stroke="#111" stroke-width="1.3" stroke-linejoin="round"/>
<g transform="translate(57.5,465.0)"><circle cx="0" cy="0" r="8.5" fill="#fff" stroke="#222" stroke-width="1.6"/><circle cx="0" cy="0" r="5" fill="#ddd" stroke="#888" stroke-width="0.8"/><path d="M-7 0H7M0 -7V7" stroke="#555" stroke-width="0.9"/></g>
<path d="M68.5 478.0H74.5V472.0Z" fill="#fff" stroke="#111" stroke-width="1.3" stroke-linejoin="round"/>
<g transform="translate(24,492.2)"><rect x="-2" y="-1" width="11" height="9" fill="#d5d5f3" stroke="#333" stroke-width="1.1"/><rect x="-8" y="-7" width="11" height="11" fill="none" stroke="#333" stroke-width="1.1"/><rect x="-2" y="-1" width="5" height="5" fill="#d8904a"/><g fill="#ccd" stroke="#556" stroke-width="0.7"><circle cx="-8" cy="-7" r="1.3"/><circle cx="3" cy="-7" r="1.3"/><circle cx="-8" cy="4" r="1.3"/><circle cx="3" cy="4" r="1.3"/></g></g>
<g transform="translate(57.5,492.2)"><path d="M-8 3L5 -6" stroke="#4a4a90" stroke-width="3"/><path d="M-8 3L5 -6" stroke="#c8c8f2" stroke-width="1.3"/><path d="M1 -8L6 -7L5 -2" fill="none" stroke="#4a4a90" stroke-width="1.5"/><rect x="3.5" y="-6" width="7" height="4" rx="0.5" fill="#fff" stroke="#333" stroke-width="1.1"/><rect x="-10" y="5" width="7" height="4" rx="0.5" fill="#fff" stroke="#333" stroke-width="1.1"/></g>
<g transform="translate(24,519.4)"><rect x="-10" y="-6" width="20" height="12" rx="2.5" fill="#c4c4ee" stroke="#333" stroke-width="1.3"/><g fill="#fff" stroke="#333" stroke-width="0.8"><circle cx="-10" cy="-3" r="1.3"/><circle cx="-10" cy="3" r="1.3"/><circle cx="10" cy="0" r="1.3"/></g></g>
<g transform="translate(57.5,519.4)"><path d="M-7 -9H-1L2 -6V4H-7Z" fill="#f4f4f4" stroke="#ccc" stroke-width="0.9"/><path d="M-1 -4H6L9 -1V9H-1Z" fill="#eef2fa" stroke="#333" stroke-width="1.1"/><path d="M4 1V6M1.5 3.5H6.5" stroke="#5a7ab5" stroke-width="0.9"/><path d="M-5 -1V8L-3 6L-1 10L0.5 9.3L-1.5 5.5H1.5Z" fill="#fff" stroke="#222" stroke-width="1"/></g>
</svg>

<div id="attr" class="abs">
  <div id="attrhdr" class="abs"></div>
<svg class="abs" style="left:0;top:0" width="118" height="298" font-family="Liberation Sans">
<g stroke="#333" stroke-width="1.7" fill="none"><path d="M6 4.5L12.5 11M12.5 4.5L6 11"/><path d="M19 7.8H27M23 3.8V11.8" stroke-width="1.9"/></g>
<text x="34" y="13" font-size="12" fill="#1a1a1a" stroke="#1a1a1a" stroke-width="0.3">Attri...</text>
<g stroke="#333" stroke-width="1.5"><path d="M84 4.3H94M84 8H94M84 11.7H94"/></g>
<text x="101" y="13.3" font-size="13" fill="#222" stroke="#222" stroke-width="0.4">?</text>
<text x="4.5" y="38.8" font-size="13" fill="#1e1e1e">Fill</text>
<line x1="24" y1="34.5" x2="113" y2="34.5" stroke="#d6d6d6" stroke-width="1"/>
<rect x="5.5" y="50.5" width="107" height="23" rx="3" fill="#fff" stroke="#c9c9c9"/>
<path d="M99.5 50.5H109.5A3 3 0 0 1 112.5 53.5V70.5A3 3 0 0 1 109.5 73.5H99.5Z" fill="#d6d6d6" stroke="#c4c4c4"/>
<path d="M102.5 60.3L106 63.8L109.5 60.3" fill="none" stroke="#222" stroke-width="1.5"/>
<rect x="9" y="54.5" width="15" height="15" rx="1" fill="#2a2a2a" stroke="#111" stroke-width="0.8"/>
<text x="55" y="66.3" font-size="13" fill="#1e1e1e">Solid</text>
<rect x="5.5" y="78.5" width="107" height="23" rx="3" fill="#fff" stroke="#c9c9c9"/>
<defs><linearGradient id="op" x1="0" x2="1"><stop offset="0" stop-color="#d5d5d5"/><stop offset="0.09" stop-color="#4a4a4a"/><stop offset="1" stop-color="#4a4a4a"/></linearGradient></defs>
<rect x="5.5" y="106.5" width="107" height="23" rx="3" fill="#dcdcdc" stroke="#c4c4c4"/>
<path d="M8.5 106.5H99.5V129.5H8.5A3 3 0 0 1 5.5 126.5V109.5A3 3 0 0 1 8.5 106.5Z" fill="url(#op)"/>
<text x="94" y="123.3" font-size="13" fill="#fff" stroke="#fff" stroke-width="0.3" text-anchor="end">100%</text>
<g fill="#222"><circle cx="106" cy="113.3" r="1.3"/><circle cx="106" cy="118" r="1.3"/><circle cx="106" cy="122.7" r="1.3"/></g>
<text x="4.5" y="151.5" font-size="13" fill="#1e1e1e">Pen</text>
<line x1="29" y1="146.5" x2="113" y2="146.5" stroke="#d6d6d6" stroke-width="1"/>
<rect x="5.5" y="163.5" width="107" height="23" rx="3" fill="#fff" stroke="#c9c9c9"/>
<path d="M99.5 163.5H109.5A3 3 0 0 1 112.5 166.5V183.5A3 3 0 0 1 109.5 186.5H99.5Z" fill="#d6d6d6" stroke="#c4c4c4"/>
<path d="M102.5 173.3L106 176.8L109.5 173.3" fill="none" stroke="#222" stroke-width="1.5"/>
<rect x="9" y="167.5" width="15" height="15" rx="1" fill="#2a2a2a" stroke="#111" stroke-width="0.8"/>
<text x="55" y="179.3" font-size="13" fill="#1e1e1e">Solid</text>
<rect x="4.5" y="191.5" width="108.5" height="23" rx="3" fill="#000"/>
<rect x="5.5" y="220.5" width="107" height="22.5" rx="3" fill="#dcdcdc" stroke="#c4c4c4"/>
<path d="M8.5 220.5H99.5V243H8.5A3 3 0 0 1 5.5 240V223.5A3 3 0 0 1 8.5 220.5Z" fill="url(#op)"/>
<text x="94" y="237" font-size="13" fill="#fff" stroke="#fff" stroke-width="0.3" text-anchor="end">100%</text>
<g fill="#222"><circle cx="106" cy="227" r="1.3"/><circle cx="106" cy="231.7" r="1.3"/><circle cx="106" cy="236.4" r="1.3"/></g>
<rect x="5.5" y="248.5" width="107" height="23" rx="3" fill="#fff" stroke="#c9c9c9"/>
<path d="M99.5 248.5H109.5A3 3 0 0 1 112.5 251.5V268.5A3 3 0 0 1 109.5 271.5H99.5Z" fill="#d6d6d6" stroke="#c4c4c4"/>
<path d="M102.5 258.3L106 261.8L109.5 258.3" fill="none" stroke="#222" stroke-width="1.5"/>
<line x1="9.5" y1="259.7" x2="84" y2="259.7" stroke="#777" stroke-width="1.2"/>
<text x="88" y="264.5" font-size="13" fill="#1e1e1e">2</text>
<rect x="6.5" y="277" width="105" height="21" fill="#e8e8e8"/>
<line x1="7" y1="287.5" x2="46" y2="287.5" stroke="#c4c4c4" stroke-width="1"/>
<line x1="71" y1="287.5" x2="111" y2="287.5" stroke="#c4c4c4" stroke-width="1"/>
<path d="M58.5 279A3.5 3.5 0 0 0 58.5 286A4 4 0 0 1 58.5 294A4 4 0 0 1 58.5 286A3.5 3.5 0 0 0 58.5 279Z" fill="none" stroke="#333" stroke-width="1.4"/>
<path d="M59 279A3.5 3.5 0 0 1 59 286A4 4 0 0 0 59 294" fill="none" stroke="#333" stroke-width="1.4"/>
<line x1="53" y1="281" x2="65" y2="292" stroke="#d0383a" stroke-width="1.6"/>
</svg>

</div>

</body></html>
